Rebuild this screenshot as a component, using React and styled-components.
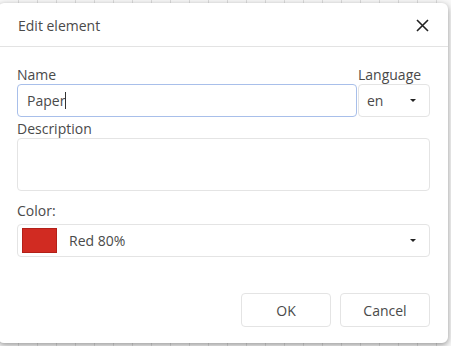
import React from "react";
import styled, { createGlobalStyle } from "styled-components";

const Global = createGlobalStyle`
  html, body { margin: 0; padding: 0; }
  body {
    width: 451px;
    height: 346px;
    overflow: hidden;
    font-family: "Open Sans", "Noto Sans", sans-serif;
    background-color: #f8f8f8;
    background-image:
      repeating-linear-gradient(90deg, transparent 0 18px, #dcdcdc 18px 19px);
  }
`;

const Page = styled.div`
  padding: 3px 0 0 0;
  margin-left: -2px;
`;

const Dialog = styled.div`
  width: 450px;
  height: 340px;
  background: #fff;
  border-radius: 6px;
  box-shadow: 0 2px 6px rgba(0, 0, 0, 0.4);
  display: flex;
  flex-direction: column;
  color: #4a4a4a;
  font-size: 14px;
`;

const Header = styled.div`
  box-sizing: border-box;
  height: 44px;
  display: flex;
  align-items: center;
  justify-content: space-between;
  padding: 2px 18px 0 20px;
  border-bottom: 1px solid #e3e3e3;
  flex-shrink: 0;
`;

const Title = styled.div`
  font-size: 14px;
  color: #4a4a4a;
`;

const CloseButton = styled.button`
  border: none;
  background: none;
  padding: 0;
  width: 16px;
  height: 16px;
  display: flex;
  align-items: center;
  justify-content: center;
`;

const Body = styled.div`
  flex: 1;
  display: flex;
  flex-direction: column;
  padding: 19px 18px 16px 19px;
`;

const Row = styled.div`
  display: flex;
  gap: 1px;
`;

const Field = styled.div`
  display: flex;
  flex-direction: column;
  flex: ${(p) => (p.$grow ? 1 : "none")};
  width: ${(p) => p.$width || "auto"};
`;

const Label = styled.div`
  height: 18px;
  line-height: 18px;
  font-size: 14px;
  color: #4a4a4a;
  margin-top: ${(p) => p.$mt || "0px"};
  margin-bottom: ${(p) => p.$mb || "0px"};
  white-space: nowrap;
`;

const Box = styled.div`
  box-sizing: border-box;
  height: ${(p) => p.$h || "33px"};
  border: 1px solid ${(p) => (p.$focus ? "#a8bfea" : "#e4e4e4")};
  border-radius: 4px;
  display: flex;
  align-items: center;
  padding: 0 ${(p) => p.$pr || "9px"} 0 ${(p) => p.$pl || "9px"};
  font-size: 14px;
  color: #4a4a4a;
  background: #fff;
`;

const Caret = styled.span`
  display: inline-block;
  width: 1px;
  height: 17px;
  background: #333;
`;

const SelectText = styled.span`
  flex: 1;
`;

const Arrow = styled.span`
  width: 0;
  height: 0;
  border-left: 3px solid transparent;
  border-right: 3px solid transparent;
  border-top: 3px solid #222;
`;

const Swatch = styled.span`
  box-sizing: border-box;
  width: 35px;
  height: 25px;
  background: #d12b22;
  border: 1px solid #b32018;
  margin-right: 12px;
`;

const Footer = styled.div`
  margin-top: auto;
  display: flex;
  justify-content: flex-end;
  gap: 9px;
`;

const Button = styled.button`
  box-sizing: border-box;
  width: 90px;
  height: 34px;
  border: 1px solid #e4e4e4;
  border-radius: 4px;
  background: #fff;
  font-family: "Open Sans", "Noto Sans", sans-serif;
  font-size: 14px;
  color: #4a4a4a;
  padding: 0;
`;

export default function App() {
  return (
    <>
      <Global />
      <Page>
        <Dialog>
          <Header>
            <Title>Edit element</Title>
            <CloseButton aria-label="Close">
              <svg width="13" height="13" viewBox="0 0 13 13">
                <path d="M1 1 L12 12 M12 1 L1 12" stroke="#222" strokeWidth="1.6" fill="none" />
              </svg>
            </CloseButton>
          </Header>
          <Body>
            <Row>
              <Field $grow>
                <Label>Name</Label>
                <Box $focus $pl="9px">
                  Paper
                  <Caret />
                </Box>
              </Field>
              <Field $width="72px">
                <Label>Language</Label>
                <Box $pl="8px" $pr="13px">
                  <SelectText>en</SelectText>
                  <Arrow />
                </Box>
              </Field>
            </Row>
            <Label $mt="3px">Description</Label>
            <Box $h="53px" />
            <Label $mt="11px" $mb="4px">Color:</Label>
            <Box $pl="4px" $pr="13px">
              <Swatch />
              <SelectText>Red 80%</SelectText>
              <Arrow />
            </Box>
            <Footer>
              <Button>OK</Button>
              <Button>Cancel</Button>
            </Footer>
          </Body>
        </Dialog>
      </Page>
    </>
  );
}
